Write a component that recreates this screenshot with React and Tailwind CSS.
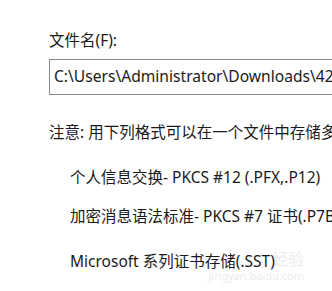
import React from 'react';

const App = () => {
    const font = { fontFamily: '"Noto Sans", "Noto Sans CJK SC", sans-serif' };
    return (
        <div className="w-[332px] h-[291px] bg-white overflow-hidden relative text-[#1a1a1a]" style={font}>
            {/* faint watermark */}
            <div className="absolute right-[28px] bottom-[10px] text-right text-[#ececec] leading-none select-none">
                <div className="text-[16px]">经验</div>
                <div className="text-[11px] mt-[3px]">jingyan.baidu.com</div>
            </div>
            <div className="relative pl-[49px] pt-[30px]">
                <div className="text-[15.5px] leading-[20px]">文件名(F):</div>
                <div className="mt-[9px] h-[36px] w-[320px] border border-[#8a8a8a] flex items-center pl-[4px] whitespace-nowrap text-[15.6px] overflow-hidden">
                    C:\Users\Administrator\Downloads\42
                </div>
                <div className="mt-[27px] text-[15.5px] leading-[20px] whitespace-nowrap">注意: 用下列格式可以在一个文件中存储多个证书:</div>
                <div className="pl-[21px] text-[15.5px] leading-[20px] whitespace-nowrap">
                    <div className="mt-[25px]">个人信息交换- PKCS #12 (.PFX,.P12)</div>
                    <div className="mt-[19px]">加密消息语法标准- PKCS #7 证书(.P7B)</div>
                    <div className="mt-[25px]">Microsoft 系列证书存储(.SST)</div>
                </div>
            </div>
        </div>
    );
};

export default App;
